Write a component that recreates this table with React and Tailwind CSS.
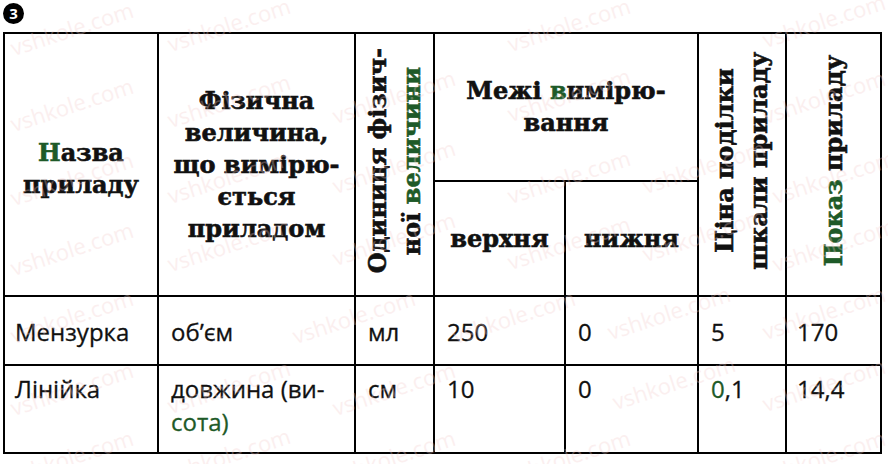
import React from 'react'

const serif = { fontFamily: '"DejaVu Serif", "Liberation Serif", serif' }
const sans = { fontFamily: '"Open Sans", "Noto Sans", sans-serif' }

const marks = [
  [8, 12], [165, 8], [505, 8], [760, 4],
  [8, 88], [165, 84], [330, 80], [505, 78], [760, 80],
  [8, 162], [165, 160], [330, 150], [505, 160], [640, 150], [770, 160],
  [8, 232], [165, 228], [330, 222], [505, 226], [640, 218], [770, 228],
  [8, 300], [290, 300], [450, 300], [605, 296], [760, 296],
  [8, 372], [165, 370], [330, 372], [610, 366], [760, 368],
  [8, 440], [165, 438], [330, 440], [505, 440], [760, 440],
]

const Green = ({ children }) => <span className="text-[#1e5a28]">{children}</span>

const Vertical = ({ children }) => (
  <div className="inline-block [writing-mode:vertical-rl] rotate-180 whitespace-nowrap text-center leading-[34px]">
    {children}
  </div>
)

export default function App() {
  return (
    <div className="relative w-[888px] h-[464px] bg-white overflow-hidden text-[#111]">
      <div className="ml-[3px] mt-[3px] flex h-[21px] w-[21px] items-center justify-center rounded-full bg-black text-[15px] font-bold text-white" style={sans}>
        3
      </div>

      <table className="ml-[3px] mt-[8px] w-[877px] table-fixed border-collapse border-2 border-black">
        <colgroup>
          <col className="w-[154px]" />
          <col className="w-[197px]" />
          <col className="w-[79px]" />
          <col className="w-[131px]" />
          <col className="w-[133px]" />
          <col className="w-[88px]" />
          <col className="w-[95px]" />
        </colgroup>
        <thead style={serif} className="text-[24px] font-bold leading-[32px] [-webkit-text-stroke:0.6px_currentColor]">
          <tr className="h-[148px]">
            <th rowSpan={2} className="border-2 border-black text-center align-middle">
              <div className="pt-2"><Green>Н</Green>азва<br />приладу</div>
            </th>
            <th rowSpan={2} className="border-2 border-black text-center align-middle">
              Фізична<br />величина,<br />що вимірю-<br />ється<br />приладом
            </th>
            <th rowSpan={2} className="border-2 border-black text-center align-middle">
              <Vertical>Одиниця фізич-<br />ної <Green>величини</Green></Vertical>
            </th>
            <th colSpan={2} className="border-2 border-black text-center align-middle">
              Межі <Green>в</Green>имірю-<br />вання
            </th>
            <th rowSpan={2} className="border-2 border-black text-center align-middle">
              <Vertical>Ціна поділки<br />шкали приладу</Vertical>
            </th>
            <th rowSpan={2} className="border-2 border-black text-center align-middle">
              <Vertical><Green>Показ</Green> приладу</Vertical>
            </th>
          </tr>
          <tr className="h-[115px]">
            <th className="border-2 border-black text-center align-middle">верхня</th>
            <th className="border-2 border-black text-center align-middle">нижня</th>
          </tr>
        </thead>
        <tbody style={sans} className="text-[24px] font-medium leading-[33px] [-webkit-text-stroke:0.3px_currentColor]">
          <tr className="h-[69px]">
            <td className="border-2 border-black pl-[10px] pt-[18px] align-top">Мензурка</td>
            <td className="border-2 border-black pl-[12px] pt-[18px] align-top">об’єм</td>
            <td className="border-2 border-black pl-[12px] pt-[18px] align-top">мл</td>
            <td className="border-2 border-black pl-[12px] pt-[18px] align-top">250</td>
            <td className="border-2 border-black pl-[12px] pt-[18px] align-top">0</td>
            <td className="border-2 border-black pl-[12px] pt-[18px] align-top">5</td>
            <td className="border-2 border-black pl-[10px] pt-[18px] align-top">170</td>
          </tr>
          <tr className="h-[88px]">
            <td className="border-2 border-black pl-[10px] pt-[6px] align-top">Лінійка</td>
            <td className="border-2 border-black pl-[12px] pt-[6px] align-top">
              довжина (ви-<br /><Green>сота)</Green>
            </td>
            <td className="border-2 border-black pl-[12px] pt-[6px] align-top">см</td>
            <td className="border-2 border-black pl-[12px] pt-[6px] align-top">10</td>
            <td className="border-2 border-black pl-[12px] pt-[6px] align-top">0</td>
            <td className="border-2 border-black pl-[12px] pt-[6px] align-top"><Green>0</Green>,1</td>
            <td className="border-2 border-black pl-[10px] pt-[6px] align-top">14,4</td>
          </tr>
        </tbody>
      </table>

      {/* scan watermark */}
      <div className="pointer-events-none absolute inset-0">
        {marks.map(([x, y], i) => (
          <span
            key={i}
            className="absolute -rotate-[18deg] text-[22px] text-[#f4cccc] opacity-30 whitespace-nowrap"
            style={{ left: x, top: y, ...sans }}
          >
            vshkole.com
          </span>
        ))}
      </div>
    </div>
  )
}
